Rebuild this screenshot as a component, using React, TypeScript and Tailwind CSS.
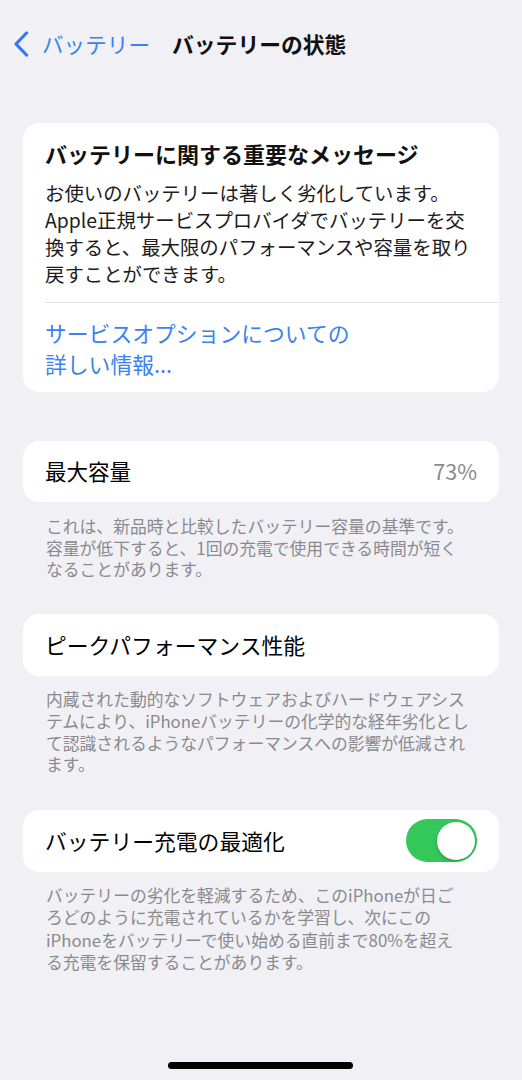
import React from "react";

const font = { fontFamily: '"Noto Sans CJK JP", "Noto Sans", sans-serif' };

function Footer({ lines, className }: { lines: string[]; className: string }) {
  return (
    <div className={`px-[46px] text-[16.8px] text-[#8a8a8e] whitespace-nowrap ${className}`}>
      {lines.map((l, i) => (
        <div key={i}>{l}</div>
      ))}
    </div>
  );
}

export default function App() {
  return (
    <div className="w-[522px] h-[1080px] bg-[#f0f0f5] relative overflow-hidden" style={font}>
      {/* Header */}
      <div className="flex items-center h-[28px] mt-[30px] pl-[13px]">
        <svg width="16" height="26" viewBox="0 0 16 26" className="mr-[13px]">
          <path d="M13.5 2 L3 13 L13.5 24" fill="none" stroke="#3478f6" strokeWidth="3.2" strokeLinecap="round" strokeLinejoin="round" />
        </svg>
        <span className="text-[21.6px] leading-[28px] text-[#3a82ef]">バッテリー</span>
        <span className="ml-[22px] text-[21.8px] leading-[28px] font-bold text-[#111]">バッテリーの状態</span>
      </div>

      {/* Card 1 */}
      <div className="mx-[23px] mt-[65px] bg-white rounded-[16px] pt-[16px] pb-[13px]">
        <div className="px-[22px] text-[22px] leading-[28px] font-bold text-[#111] whitespace-nowrap">
          バッテリーに関する重要なメッセージ
        </div>
        <div className="px-[22px] mt-[12px] text-[19.4px] leading-[27px] text-[#1c1c1e] whitespace-nowrap">
          <div>お使いのバッテリーは著しく劣化しています。</div>
          <div>Apple正規サービスプロバイダでバッテリーを交</div>
          <div>換すると、最大限のパフォーマンスや容量を取り</div>
          <div>戻すことができます。</div>
        </div>
        <div className="ml-[22px] mt-[15px] h-px bg-[#e2e2e6]" />
        <div className="px-[22px] mt-[14px] text-[21.8px] leading-[31px] text-[#3a82ef] whitespace-nowrap">
          <div>サービスオプションについての</div>
          <div>詳しい情報...</div>
        </div>
      </div>

      {/* Card 2 */}
      <div className="mx-[23px] mt-[49px] bg-white rounded-[16px] h-[61px] flex items-center justify-between px-[22px]">
        <span className="text-[21.5px] text-black">最大容量</span>
        <span className="text-[21.5px] text-[#8a8a8e]">73%</span>
      </div>
      <Footer
        className="mt-[14px] leading-[21.7px]"
        lines={[
          "これは、新品時と比較したバッテリー容量の基準です。",
          "容量が低下すると、1回の充電で使用できる時間が短く",
          "なることがあります。",
        ]}
      />

      {/* Card 3 */}
      <div className="mx-[23px] mt-[33px] bg-white rounded-[16px] h-[62px] flex items-center px-[22px]">
        <span className="text-[21.8px] text-black">ピークパフォーマンス性能</span>
      </div>
      <Footer
        className="mt-[13px] leading-[21.7px]"
        lines={[
          "内蔵された動的なソフトウェアおよびハードウェアシス",
          "テムにより、iPhoneバッテリーの化学的な経年劣化とし",
          "て認識されるようなパフォーマンスへの影響が低減され",
          "ます。",
        ]}
      />

      {/* Card 4 */}
      <div className="mx-[23px] mt-[34px] bg-white rounded-[16px] h-[62px] flex items-center justify-between pl-[22px] pr-[22px]">
        <span className="text-[21.8px] text-black">バッテリー充電の最適化</span>
        <div className="w-[71px] h-[43px] rounded-full bg-[#34c759] flex items-center justify-end pr-[2.5px]">
          <div className="w-[38px] h-[38px] rounded-full bg-white shadow-[0_2px_4px_rgba(0,0,0,0.2)]" />
        </div>
      </div>
      <Footer
        className="mt-[12px] leading-[22.3px]"
        lines={[
          "バッテリーの劣化を軽減するため、このiPhoneが日ご",
          "ろどのように充電されているかを学習し、次にこの",
          "iPhoneをバッテリーで使い始める直前まで80%を超え",
          "る充電を保留することがあります。",
        ]}
      />

      {/* Home indicator */}
      <div className="absolute left-[168px] top-[1062px] w-[185px] h-[7px] rounded-full bg-black" />
    </div>
  );
}
